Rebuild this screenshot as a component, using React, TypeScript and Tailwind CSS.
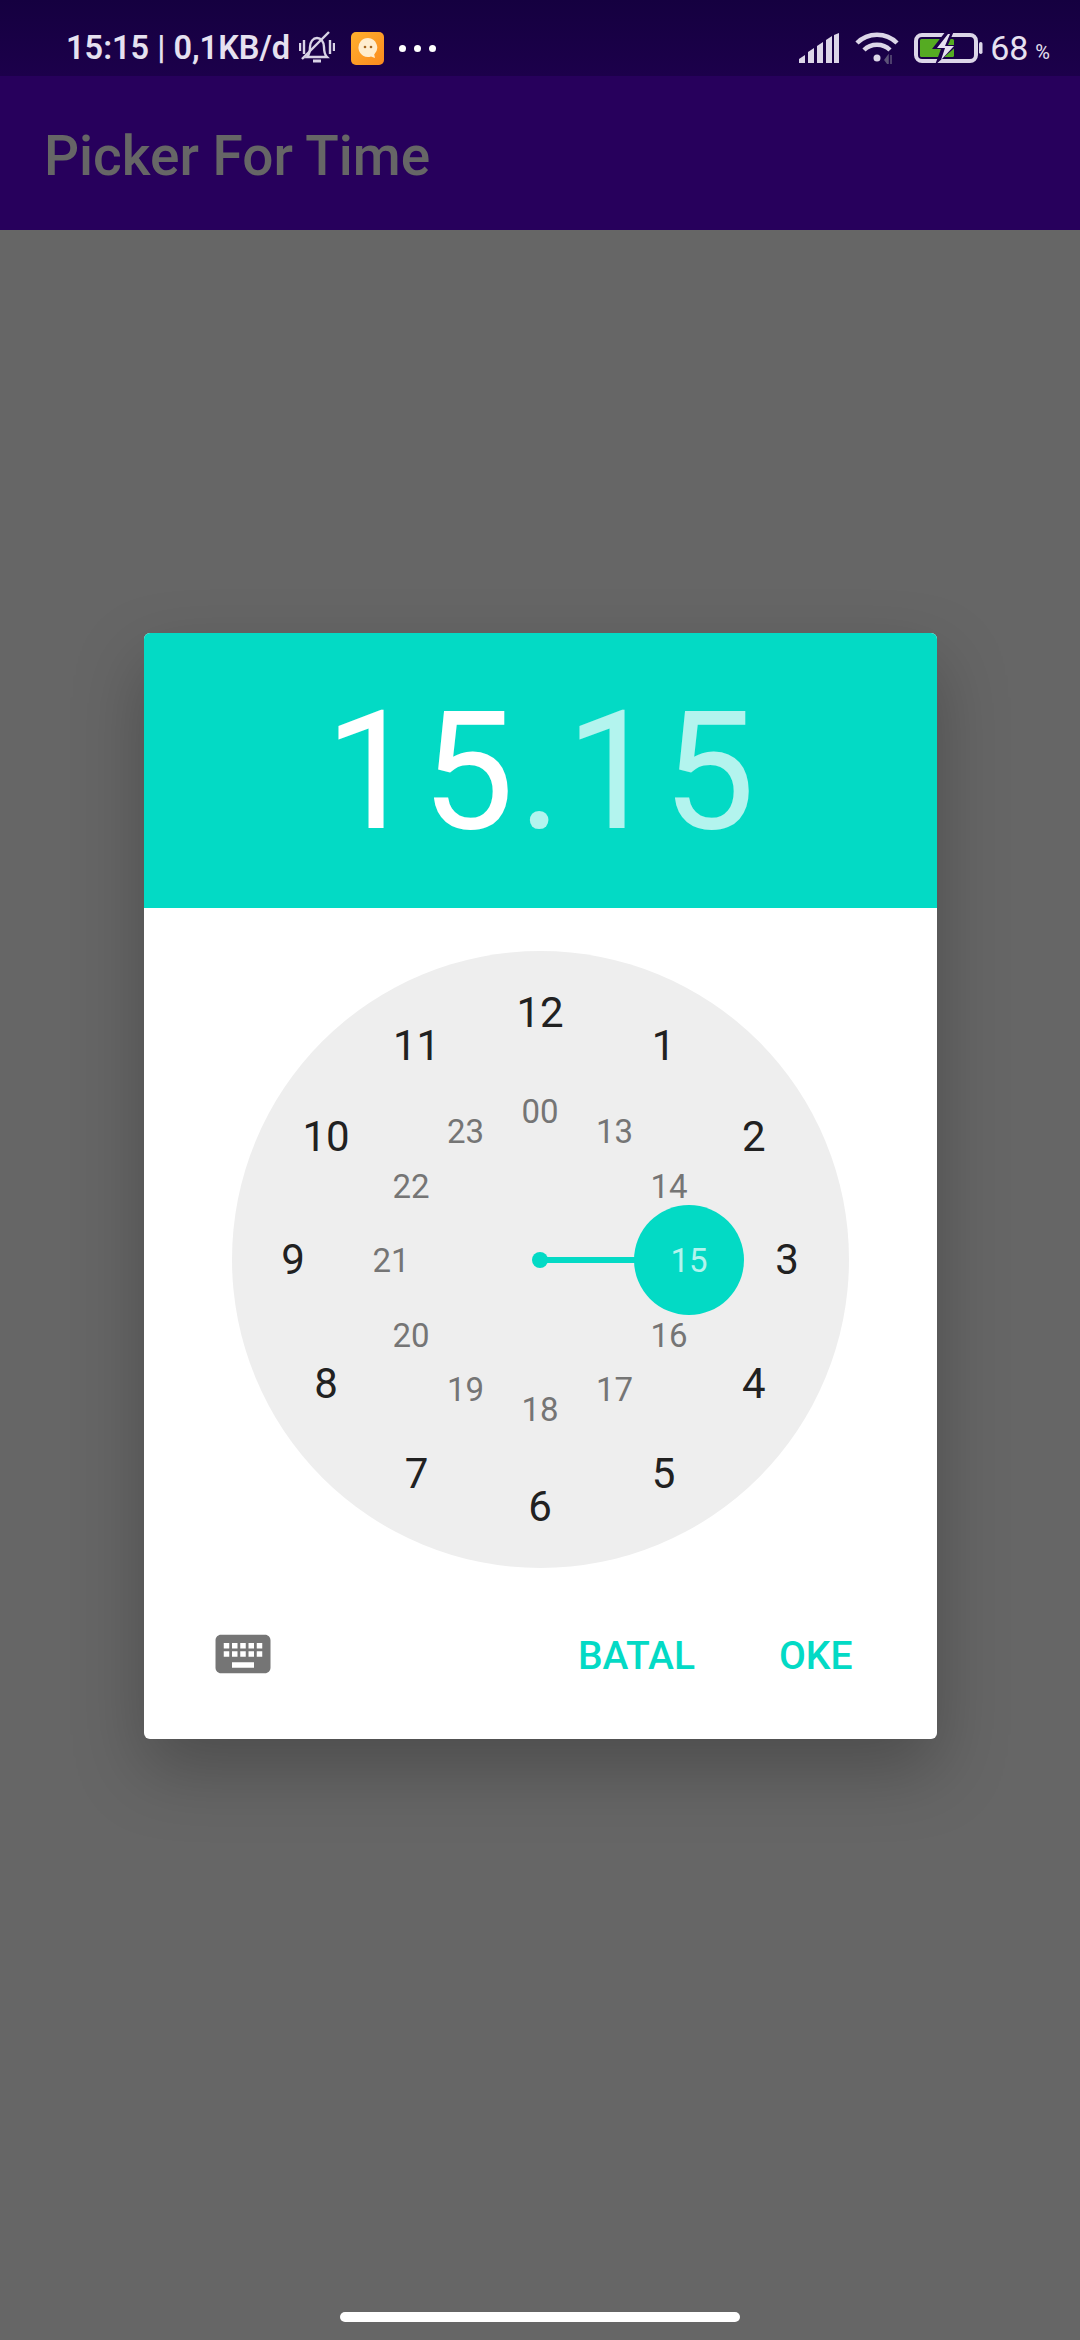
import React from 'react';

const OUTER = ['12', '1', '2', '3', '4', '5', '6', '7', '8', '9', '10', '11'];
const INNER = ['00', '13', '14', '15', '16', '17', '18', '19', '20', '21', '22', '23'];

const place = (i: number, r: number) => {
  const a = (i * Math.PI) / 6;
  return { left: 308.5 + r * Math.sin(a), top: 309 - r * Math.cos(a) };
};

const StatusBar: React.FC = () => (
  <div className="flex h-[76px] items-center bg-gradient-to-b from-[#150040] to-[#1c004b] pl-[66px] pr-[30px] pt-[20px] text-[#e6e1f0]">
    <span className="w-[227px] whitespace-nowrap text-[32.5px] font-semibold leading-none">15:15 | 0,1KB/d</span>
    <svg className="ml-[6px]" width="36" height="36" viewBox="0 0 36 36" fill="none" stroke="#d9d3e6" strokeWidth="2.4">
      <path d="M8 27c3-3 3-6 3-10 0-5 3-9 7-9s7 4 7 9c0 4 0 7 3 10z" />
      <path d="M3 29 L30 2" />
      <path d="M14 31h8" strokeWidth="3" />
      <path d="M1 13v8M5 10v14M31 10v14M35 13v8" />
    </svg>
    <div className="ml-[16px] flex h-[33px] w-[33px] items-center justify-center rounded-[5px] bg-gradient-to-br from-[#ffb02e] to-[#fb8a1e]">
      <svg width="22" height="22" viewBox="0 0 22 22">
        <path d="M11 1a9.5 9.5 0 1 0 3 18.5l4 1.5-.8-3.600A9.500 9.500 0 0 0 11 1z" fill="#ffedcf" />
        <circle cx="8" cy="10" r="1.300" fill="#a5651f" />
        <circle cx="14" cy="10" r="1.300" fill="#a5651f" />
      </svg>
    </div>
    <div className="ml-[15px] flex gap-[8px]">
      <span className="h-[7px] w-[7px] rounded-full bg-white" />
      <span className="h-[7px] w-[7px] rounded-full bg-white" />
      <span className="h-[7px] w-[7px] rounded-full bg-white" />
    </div>
    <div className="flex-1" />
    <svg width="40" height="30" viewBox="0 0 40 30" fill="#dcd6e8">
      <path d="M0 30V26L6 22V30zM9 30V19L15 15V30zM18 30V13L24 9V30zM27 30V7L33 3V30zM35 30V2L40 0V30z" />
    </svg>
    <svg className="ml-[16px]" width="44" height="32" viewBox="0 0 44 32" fill="none" stroke="#dcd6e8" strokeWidth="4.500">
      <path d="M2 11c11-11 29-11 40 0" />
      <path d="M9 18c7-7 19-7 26 0" />
      <circle cx="22" cy="26" r="3.500" fill="#dcd6e8" stroke="none" />
      <path d="M33 24l-3 4 3 4zM36 23v9" fill="#5d5378" stroke="#5d5378" strokeWidth="1.500" />
    </svg>
    <svg className="ml-[15px]" width="70" height="32" viewBox="0 0 70 32" fill="none">
      <rect x="2" y="3" width="60" height="26" rx="6" stroke="#dcd6e8" strokeWidth="4" />
      <rect x="6" y="7" width="34" height="18" rx="1.500" fill="#55ab22" />
      <path d="M32 -1L18 17H27L21 33L44 13H34L40 -1z" fill="#1c004b" />
      <path d="M34 2L23 16H31L27 28L40 14H31L36 2z" fill="#e6e1f0" />
      <rect x="65" y="10" width="3.500" height="12" rx="1.700" fill="#dcd6e8" />
    </svg>
    <span className="ml-[6px] text-[34px] font-normal leading-none">68</span>
    <span className="ml-[7px] mt-[8px] text-[20px] font-normal leading-none">%</span>
  </div>
);

const ClockFace: React.FC = () => (
  <div className="relative h-[617px] w-[617px] rounded-full bg-[#eeeeee]">
    {OUTER.map((n, i) => (
      <span
        key={n}
        className="absolute -translate-x-1/2 -translate-y-1/2 text-[42px] leading-none text-[#212121]"
        style={place(i, 247)}
      >
        {n}
      </span>
    ))}
    <div className="absolute left-[300px] top-[301px] h-4 w-4 rounded-full bg-[#03dac5]" />
    <div className="absolute left-[308px] top-[306px] h-[6px] w-[96px] bg-[#03dac5]" />
    <div className="absolute left-[402px] top-[254px] h-[110px] w-[110px] rounded-full bg-[#03dac5]" />
    {INNER.map((n, i) => (
      <span
        key={n}
        className={`absolute -translate-x-1/2 -translate-y-1/2 text-[33px] leading-none ${n === '15' ? 'text-[#b3f4ee]' : 'text-[#757575]'}`}
        style={place(i, 149)}
      >
        {n}
      </span>
    ))}
  </div>
);

const App: React.FC = () => {
  return (
    <div className="flex h-[2340px] w-[1080px] flex-col overflow-hidden bg-[#666666] font-['Roboto',sans-serif]">
      <StatusBar />
      <header className="flex h-[154px] items-center bg-[#27005c] pl-[44px] pt-[7px]">
        <h1 className="text-[55px] font-medium leading-none text-[#666666]">Picker For Time</h1>
      </header>

      <main className="flex flex-1 flex-col items-center pt-[403px]">
        <div className="flex h-[1106px] w-[793px] flex-col overflow-hidden rounded-[6px] bg-white shadow-[0_30px_70px_rgba(0,0,0,0.25)]">
          {/* Time header */}
          <div className="flex h-[275px] items-center justify-center bg-[#03dac5] pl-[4px] pt-[2px] text-[165px] font-normal leading-none tracking-[4px]">
            <span className="text-white">15</span>
            <span className="text-[#b3f4ee]">.15</span>
          </div>

          {/* Clock */}
          <div className="flex justify-center pt-[43px]">
            <ClockFace />
          </div>

          {/* Actions */}
          <div className="flex items-center pl-[66px] pr-[84px] pt-[53px]">
            <svg width="66" height="66" viewBox="0 0 24 24" fill="#757575">
              <path d="M20 5H4c-1.100 0-1.990.9-1.990 2L2 17c0 1.100.9 2 2 2h16c1.100 0 2-.9 2-2V7c0-1.100-.9-2-2-2zm-9 3h2v2h-2V8zm0 3h2v2h-2v-2zM8 8h2v2H8V8zm0 3h2v2H8v-2zm-1 2H5v-2h2v2zm0-3H5V8h2v2zm9 7H8v-2h8v2zm0-4h-2v-2h2v2zm0-3h-2V8h2v2zm3 3h-2v-2h2v2zm0-3h-2V8h2v2z" />
            </svg>
            <div className="flex-1" />
            <button className="mt-[4px] text-[39px] font-medium leading-none text-[#03dac5]">BATAL</button>
            <button className="ml-[84px] mt-[4px] text-[39px] font-medium leading-none text-[#03dac5]">OKE</button>
          </div>
        </div>

        <div className="flex-1" />
        <div className="mb-[18px] h-[10px] w-[400px] rounded-full bg-white" />
      </main>
    </div>
  );
};

export default App;
